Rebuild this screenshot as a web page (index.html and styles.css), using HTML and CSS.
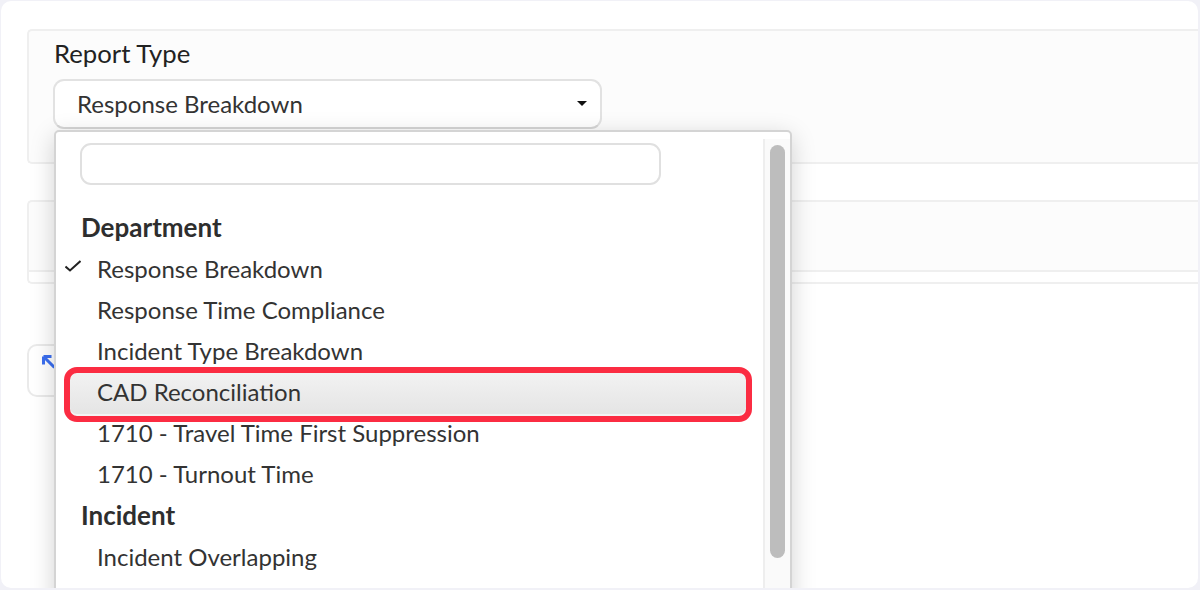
FILE: index.html
```html
<!DOCTYPE html>
<html lang="en">
<head>
    <meta charset="UTF-8">
    <title>Report Type</title>
    <link rel="stylesheet" href="styles.css">
</head>
<body>
    <div class="window">
        <div class="panel panel-type">
            <label class="field-label">Report Type</label>
            <div class="select">
                <span>Response Breakdown</span>
                <span class="caret"></span>
            </div>
        </div>
        <div class="panel panel-filters"></div>
        <div class="panel-rule"></div>
        <div class="back-button">
            <svg class="back-icon" viewBox="0 0 14 14" width="14" height="14">
                <path d="M1.5 1.5h8M1.5 1.5v8M1.5 1.5l11 11" fill="none" stroke="#3b6ff0" stroke-width="3"/>
            </svg>
        </div>

        <div class="menu">
            <div class="menu-list">
                <div class="search"></div>
                <div class="group">Department</div>
                <div class="item selected">
                    <svg class="check" viewBox="0 0 16 12" width="16" height="12">
                        <path d="M0.5 6.5l4.5 4L15.5 1" fill="none" stroke="#222" stroke-width="2"/>
                    </svg>
                    Response Breakdown
                </div>
                <div class="item">Response Time Compliance</div>
                <div class="item">Incident Type Breakdown</div>
                <div class="item active">CAD Reconciliation</div>
                <div class="item">1710 - Travel Time First Suppression</div>
                <div class="item">1710 - Turnout Time</div>
                <div class="group">Incident</div>
                <div class="item">Incident Overlapping</div>
                <div class="item">Incident Call Report and Map</div>
            </div>
            <div class="scrollbar">
                <div class="thumb"></div>
            </div>
        </div>
    </div>
</body>
</html>
```

FILE: styles.css
```css
html, body {
    height: 100%;
}

body {
    margin: 0;
    padding: 1px 2px 2px 1px;
    box-sizing: border-box;
    background-color: #f1f1f7;
    font-family: "Lato", "Liberation Sans", sans-serif;
    color: #333;
    overflow: hidden;
}

.window {
    position: relative;
    height: 100%;
    padding-top: 28px;
    box-sizing: border-box;
    background-color: #fff;
    border-radius: 10px;
    overflow: hidden;
}

.panel {
    margin-left: 26px;
    box-sizing: border-box;
    background-color: #fcfcfc;
    border: 2px solid #efefef;
    border-right: 0;
    border-radius: 5px 0 0 5px;
}

.panel-type {
    height: 135px;
    padding: 6px 0 0 24px;
}

.panel-filters {
    height: 72px;
    margin-top: 36px;
    border-radius: 5px 0 0 0;
}

.panel-rule {
    height: 12px;
    margin-left: 26px;
    box-sizing: border-box;
    border-left: 2px solid #efefef;
    border-bottom: 2px solid #efefef;
    border-radius: 0 0 0 5px;
}

.field-label {
    display: block;
    height: 42px;
    padding-left: 1px;
    font-size: 25.7px;
    line-height: 32px;
    color: #222;
}

.select {
    display: flex;
    justify-content: space-between;
    align-items: center;
    width: 549px;
    height: 50px;
    padding: 0 13px 2px 22px;
    box-sizing: border-box;
    background-color: #fff;
    border: 2px solid #e2e2e2;
    border-bottom-color: #d6d6d6;
    border-radius: 11px;
    font-size: 24px;
}

.caret {
    width: 0;
    height: 0;
    border-top: 5px solid #111;
    border-left: 5px solid transparent;
    border-right: 5px solid transparent;
}

.back-button {
    width: 60px;
    height: 53px;
    margin: 60px 0 0 26px;
    padding: 9px 0 0 13px;
    box-sizing: border-box;
    border: 2px solid #eaeaea;
    border-radius: 10px;
}

.back-icon {
    display: block;
}

.menu {
    position: absolute;
    top: 129px;
    left: 53px;
    display: flex;
    width: 738px;
    height: 520px;
    box-sizing: border-box;
    background-color: #fff;
    border: 2px solid #d4d4d4;
    border-radius: 5px;
    box-shadow: 0 6px 24px rgba(0, 0, 0, 0.18);
}

.menu-list {
    flex: 1;
    min-width: 0;
    padding: 11px 11px 0 9px;
}

.search {
    width: 581px;
    height: 42px;
    margin-left: 15px;
    box-sizing: border-box;
    background-color: #fff;
    border: 2px solid #e0e0e0;
    border-radius: 11px;
}

.group {
    height: 42px;
    padding-left: 16px;
    font-size: 26px;
    font-weight: 700;
    line-height: 42px;
    color: #2e2e2e;
}

.group:nth-child(2) {
    height: 41px;
    margin-top: 22px;
    line-height: 40px;
}

.item {
    position: relative;
    height: 41px;
    padding-left: 32px;
    font-size: 24px;
    line-height: 41px;
}

.check {
    position: absolute;
    left: 0;
    top: 12px;
}

.active {
    width: 688px;
    height: 55px;
    margin: -4px 0 -10px -1px;
    box-sizing: border-box;
    padding-left: 27px;
    background: linear-gradient(#f2f2f2, #e4e4e4);
    border: 6px solid #fb2c42;
    border-radius: 13px;
    box-shadow: inset 0 -2px 0 #f4f4f4;
    line-height: 38px;
}

.scrollbar {
    width: 27px;
    height: 100%;
    margin-top: 7px;
    box-sizing: border-box;
    padding: 6px 5px 0;
    background-color: #fafafa;
    border-left: 2px solid #eee;
}

.thumb {
    height: 413px;
    background-color: #bdbdbd;
    border-radius: 8px;
}
```
